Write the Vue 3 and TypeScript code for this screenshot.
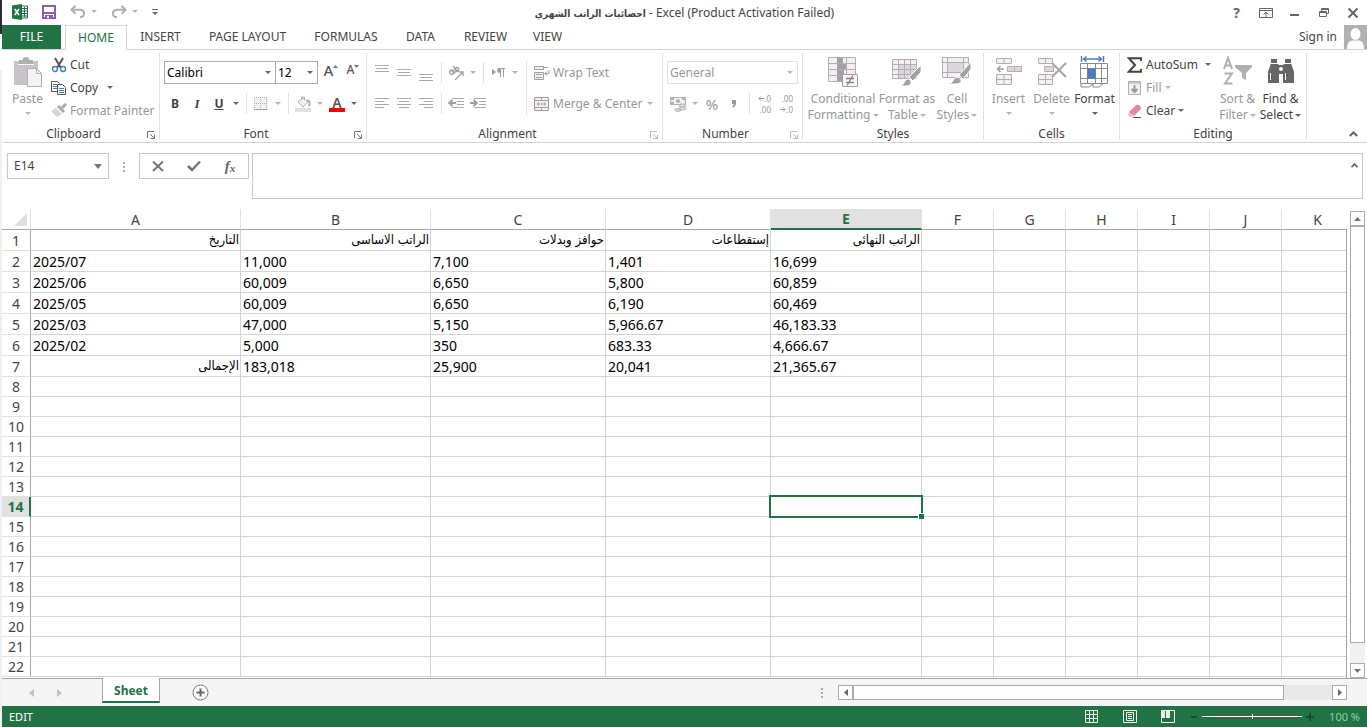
<script setup lang="ts">
import { ref } from 'vue'

interface Row {
  id: number
  cells: string[]
  tall: boolean
}

const tabs = ['INSERT', 'PAGE LAYOUT', 'FORMULAS', 'DATA', 'REVIEW', 'VIEW']
const columns = ['A', 'B', 'C', 'D', 'E', 'F', 'G', 'H', 'I', 'J', 'K']
const activeColumn = 'E'
const activeRow = 14

const data: string[][] = [
  ['التاريخ', 'الراتب الاساسى', 'حوافز وبدلات', 'إستقطاعات', 'الراتب النهائى'],
  ['2025/07', '11,000', '7,100', '1,401', '16,699'],
  ['2025/06', '60,009', '6,650', '5,800', '60,859'],
  ['2025/05', '60,009', '6,650', '6,190', '60,469'],
  ['2025/03', '47,000', '5,150', '5,966.67', '46,183.33'],
  ['2025/02', '5,000', '350', '683.33', '4,666.67'],
  ['الإجمالى', '183,018', '25,900', '20,041', '21,365.67'],
]

const rows: Row[] = Array.from({ length: 22 }, (_, i) => ({
  id: i + 1,
  cells: columns.map((_, c) => data[i]?.[c] ?? ''),
  tall: i < data.length,
}))

const isArabic = (text: string): boolean => /[\u0600-\u06ff]/.test(text)

const nameBox = ref('E14')
const formula = ref('')
const zoomLevel = ref(50)
</script>

<template>
  <div class="screen">
    <div class="edge"><i class="edge-dark"></i><i class="edge-gap"></i></div>
    <div class="app">
      <header class="titlebar">
        <div class="quick">
          <svg class="logo" width="16" height="16" viewBox="0 0 16 16">
            <path d="M9 2h6.5v12H9z" fill="#fff" stroke="#217346" />
            <path d="M10 4.5h5M10 7h5M10 9.5h5M10 12h5M12.5 3v10" stroke="#217346" />
            <path d="M0 1.5 10 0v16L0 14.5z" fill="#217346" />
            <path d="M2.8 5 7 11M7 5l-4.2 6" stroke="#fff" stroke-width="1.6" />
          </svg>
          <button class="q-save" aria-label="Save">
            <svg width="14" height="14" viewBox="0 0 14 14"><path d="M1 1h12v12H1z" fill="#fff" stroke="#8a5eb0" stroke-width="2" /><path d="M1 7h12v2H1zM3 10h8v3H3z" fill="#8a5eb0" /><path d="M5 11h2v2H5z" fill="#fff" /></svg>
          </button>
          <button class="q-undo" aria-label="Undo">
            <svg width="16" height="14" viewBox="0 0 16 14"><path d="M5.500.8 1.500 4.800l4 4M2 4.800h7.500c6 0 6 7 .5 7.500" fill="none" stroke="#b1b1b1" stroke-width="2" /></svg>
            <i class="caret off"></i>
          </button>
          <button class="q-redo" aria-label="Redo">
            <svg width="16" height="14" viewBox="0 0 16 14"><path d="M10.500.8l4 4-4 4M14 4.800H6.500c-6 0-6 7-.5 7.500" fill="none" stroke="#b1b1b1" stroke-width="2" /></svg>
            <i class="caret off"></i>
          </button>
          <button class="q-more" aria-label="Customize toolbar"><i class="bar"></i><i class="caret"></i></button>
        </div>
        <h1><bdi class="doc" dir="rtl">احصائيات الراتب الشهري</bdi> - Excel (Product Activation Failed)</h1>
        <div class="window">
          <button class="help" aria-label="Help">?</button>
          <button aria-label="Ribbon display options">
            <svg width="14" height="12" viewBox="0 0 14 12" fill="none" stroke="#666"><path d="M.5 1.500h13v9H.5zM.5 3.500h13M7 10V5.500M4.500 7.500 7 5.200l2.500 2.300" /></svg>
          </button>
          <button aria-label="Minimize"><svg width="10" height="12" viewBox="0 0 10 12"><path d="M0 7h9v2H0z" fill="#666" /></svg></button>
          <button aria-label="Restore"><svg width="12" height="12" viewBox="0 0 12 12" fill="none" stroke="#666"><path d="M3.500 4V1.500h7v5H8.500M3.500 2.500h7M1.500 4.500h7v5h-7zM1.500 5.500h7" /></svg></button>
          <button aria-label="Close"><svg width="12" height="12" viewBox="0 0 12 12"><path d="M1.500 1.500l9 9M10.500 1.500l-9 9" stroke="#666" stroke-width="2" /></svg></button>
        </div>
      </header>

      <nav class="tabs">
        <button class="file">FILE</button>
        <button class="tab active">HOME</button>
        <button v-for="t in tabs" :key="t" class="tab">{{ t }}</button>
        <span></span>
        <a class="signin" href="#">Sign in</a>
        <svg class="avatar" width="23" height="24" viewBox="0 0 23 24"><path d="M0 0h23v24H0z" fill="#b1b1b1" /><ellipse cx="11.500" cy="9" rx="5" ry="6" fill="#fff" /><path d="M3 24c0-6 2-8 5-8.500h7c3 .5 5 2.500 5 8.500z" fill="#fff" /></svg>
      </nav>

      <section class="ribbon">
        <div class="group clipboard">
          <div class="body">
            <button class="big off">
              <svg width="30" height="32" viewBox="0 0 30 32"><path d="M1 5h24v24H1z" fill="#c6c4c6" /><path d="M6 4h4V2.500Q10 1 13 1t3 1.500V4h4v4H6z" fill="#b1afb1" /><path d="M5 8h16v1H5z" fill="#fff" /><path d="M14.500 12.500h9l5 5v13h-14z" fill="#f6f1f6" stroke="#b1afb1" /><path d="M23.500 12.500v5h5" fill="none" stroke="#b1afb1" /></svg>
              <span>Paste</span><i class="caret off"></i>
            </button>
            <div class="list">
              <button>
                <svg width="16" height="16" viewBox="0 0 16 16" fill="none"><path d="M4 1l6 10M12 1L6 11" stroke="#555" stroke-width="2" /><circle cx="4" cy="12" r="2.500" stroke="#4a7ebb" stroke-width="1.400" /><circle cx="12" cy="12" r="2.500" stroke="#4a7ebb" stroke-width="1.400" /></svg>
                Cut
              </button>
              <button>
                <svg width="16" height="16" viewBox="0 0 16 16" fill="#fff" stroke="#555"><path d="M.5 1.500h6l2 2v8h-8z" /><path d="M2 4.500h4M2 6.500h4M2 8.500h4" stroke="#4a7ebb" /><path d="M6.500 4.500h5l3 3v7h-8z" /><path d="M8 8.500h5M8 10.500h5M8 12.500h5" stroke="#4a7ebb" /></svg>
                Copy <i class="caret far"></i>
              </button>
              <button class="off">
                <svg width="16" height="16" viewBox="0 0 16 16"><path d="M0 8l5-3 6 6-5 3z" fill="#d8d4d8" /><path d="M6 4l2-2 6 6-2 2z" fill="#aaa8aa" /><path d="M11 5l4-4" stroke="#aaa8aa" stroke-width="3" /></svg>
                Format Painter
              </button>
            </div>
          </div>
          <footer>Clipboard<button class="launch" aria-label="Clipboard settings"><svg width="8" height="8" viewBox="0 0 8 8" fill="none" stroke="#777"><path d="M.5 7V.5H7M3 3l4 4M7.500 3.500v4h-4" /></svg></button></footer>
        </div>

        <div class="group font">
          <div class="body rows">
            <div class="row selects">
              <label class="pick family"><select aria-label="Font family"><option>Calibri</option></select><i class="caret"></i></label>
              <label class="pick size"><select aria-label="Font size"><option>12</option></select><i class="caret"></i></label>
              <button class="c22 grow" aria-label="Increase font size">A<svg width="5" height="3" viewBox="0 0 5 3"><path d="M0 3h5L2.500 0z" fill="#4a7ebb" /></svg></button>
              <button class="c22 shrink" aria-label="Decrease font size">A<svg width="5" height="3" viewBox="0 0 5 3"><path d="M0 0h5L2.500 3z" fill="#4a7ebb" /></svg></button>
            </div>
            <div class="row glyphs">
              <button class="c22 b">B</button><button class="c22 i">I</button><button class="c22 u">U</button>
              <i class="caret c12"></i><i class="vr"></i>
              <button class="c22" aria-label="Borders"><svg width="14" height="14" viewBox="0 0 14 14"><path d="M0 0h14v13H0z" fill="#f5eff5" /><path d="M.5 0v13M6.500 0v13M12.500 0v13M0 .5h13M0 6.500h13" stroke="#b1afb1" stroke-dasharray="1 1" /><path d="M0 12.500h13" stroke="#999" /></svg></button>
              <i class="caret off c12"></i><i class="vr"></i>
              <button class="c22" aria-label="Fill colour"><svg width="16" height="16" viewBox="0 0 16 16"><path d="M0 12h16v4H0z" fill="#e4dfe4" /><path d="M3 6l5-4 5 4-5 5z" fill="#f5eff5" stroke="#b1afb1" /><path d="M6.500 4V1h3v3" fill="none" stroke="#b1afb1" /><path d="M12 4c3 1 3 4 2 6" fill="none" stroke="#b1afb1" stroke-width="2" /></svg></button>
              <i class="caret off c12"></i>
              <button class="c22 colour" aria-label="Font colour">A</button>
              <i class="caret c12"></i>
            </div>
          </div>
          <footer>Font<button class="launch" aria-label="Font settings"><svg width="8" height="8" viewBox="0 0 8 8" fill="none" stroke="#777"><path d="M.5 7V.5H7M3 3l4 4M7.500 3.500v4h-4" /></svg></button></footer>
        </div>

        <div class="group alignment">
          <div class="body">
            <div class="rows">
              <div class="row">
                <button class="c22" aria-label="Top align"><svg width="14" height="16" viewBox="0 0 14 16" stroke="#aaa"><path d="M0 .5h14M1 3.500h12M0 6.500h14" /></svg></button>
                <button class="c22" aria-label="Middle align"><svg width="14" height="16" viewBox="0 0 14 16" stroke="#aaa"><path d="M0 4.500h14M1 7.500h12M0 10.500h14" /></svg></button>
                <button class="c22" aria-label="Bottom align"><svg width="14" height="16" viewBox="0 0 14 16" stroke="#aaa"><path d="M0 9.500h14M1 12.500h12M0 15.500h14" /></svg></button>
                <i class="vr"></i>
                <button class="c22" aria-label="Orientation"><svg width="16" height="16" viewBox="0 0 16 16" fill="none" stroke="#a09ea0" stroke-width="1.300"><circle cx="3.500" cy="7.500" r="2" /><path d="M3.500 4.500l4 4M5 1l5 5.500" /><circle cx="8.800" cy="4.500" r="2" /><path d="M7 15l8-8M11 7h4v4" /></svg></button>
                <i class="caret off c12"></i><i class="vr thin"></i>
                <button class="c22" aria-label="Text direction"><svg width="13" height="9" viewBox="0 0 13 9"><path d="M0 1l4 3-4 3z" fill="#a09ea0" /><path d="M8.500 0v9M11.500 0v9M6 .5h7" stroke="#a09ea0" /><path d="M8.500 0Q5 0 5 2.500T8.500 5z" fill="#a09ea0" /></svg></button>
                <i class="caret off c12"></i>
              </div>
              <div class="row">
                <button class="c22" aria-label="Align left"><svg width="14" height="11" viewBox="0 0 14 11" stroke="#aaa"><path d="M0 .5h14M0 3.500h9M0 6.500h14M0 9.500h9" /></svg></button>
                <button class="c22" aria-label="Center"><svg width="14" height="11" viewBox="0 0 14 11" stroke="#aaa"><path d="M0 .5h14M2 3.500h10M0 6.500h14M2 9.500h10" /></svg></button>
                <button class="c22" aria-label="Align right"><svg width="14" height="11" viewBox="0 0 14 11" stroke="#aaa"><path d="M0 .5h14M5 3.500h9M0 6.500h14M5 9.500h9" /></svg></button>
                <i class="vr"></i>
                <button class="c22" aria-label="Decrease indent"><svg width="16" height="11" viewBox="0 0 16 11"><path d="M4 .5h12M9 3.500h7M9 6.500h7M4 9.500h12" stroke="#aaa" /><path d="M8 5H2M4.500 2 1.200 5l3.300 3" fill="none" stroke="#a09ea0" stroke-width="2" /></svg></button>
                <button class="c22" aria-label="Increase indent"><svg width="16" height="11" viewBox="0 0 16 11"><path d="M4 .5h12M9 3.500h7M9 6.500h7M4 9.500h12" stroke="#aaa" /><path d="M0 5h6M3.500 2l3.300 3-3.300 3" fill="none" stroke="#a09ea0" stroke-width="2" /></svg></button>
              </div>
            </div>
            <i class="vr tall"></i>
            <div class="rows wide">
              <div class="row off">
                <button class="text"><svg width="16" height="16" viewBox="0 0 16 16" fill="#f5eff5" stroke="#a09ea0"><path d="M.5 1.500h9v3h-9zM.5 7.500h9v7h-9zM9 2.500h5M2 9.500h6M2 12.500h6" /><path d="M15 5v3.500h-4M13 6.500l-2.500 2L13 10.500" fill="none" /></svg>Wrap Text</button>
              </div>
              <div class="row off">
                <button class="text"><svg width="16" height="16" viewBox="0 0 16 16" fill="#f5eff5" stroke="#a09ea0"><path d="M.5 1.500h14v13H.5zM.5 4.500h14M.5 11.500h14M7.500 1.500v3M7.500 11.500v3M3 8h9M5 6.500 3 8l2 1.500M10 6.500 12 8l-2 1.500" /></svg>Merge &amp; Center</button>
                <i class="caret off end"></i>
              </div>
            </div>
          </div>
          <footer>Alignment<button class="launch" aria-label="Alignment settings"><svg width="8" height="8" viewBox="0 0 8 8" fill="none" stroke="#bbb"><path d="M.5 7V.5H7M3 3l4 4M7.500 3.500v4h-4" /></svg></button></footer>
        </div>

        <div class="group number">
          <div class="body rows">
            <div class="row selects">
              <label class="pick format"><select aria-label="Number format"><option>General</option></select><i class="caret off"></i></label>
            </div>
            <div class="row off">
              <button class="c22" aria-label="Accounting format"><svg width="17" height="16" viewBox="0 0 17 16"><path d="M.5 1.500h15v7H.5z" fill="#f5eff5" stroke="#b1afb1" /><path d="M1 2h3v2H1zM12 2h3v2h-3zM1 6h3v2H1z" fill="#b1afb1" /><circle cx="8" cy="5" r="2" fill="#b1afb1" /><g fill="#e4dfe4" stroke="#b1afb1"><ellipse cx="12.500" cy="12.500" rx="3.500" ry="1.500" /><ellipse cx="12.500" cy="9.500" rx="3.500" ry="1.500" /><ellipse cx="8" cy="14" rx="3" ry="1.300" /></g></svg></button>
              <i class="caret off c12"></i>
              <button class="c22 percent">%</button>
              <button class="c22" aria-label="Comma style"><svg width="6" height="9" viewBox="0 0 6 9"><path d="M1 1h4v3Q5 7 2 8.500L1 8q2-1.500 1.500-3H1z" fill="#999" /></svg></button>
              <i class="vr"></i>
              <button class="c22 decimals" aria-label="Increase decimal"><span><svg width="6" height="5" viewBox="0 0 6 5"><path d="M6 2.500H1M3 .5l-2 2 2 2" fill="none" stroke="#999" /></svg>.0</span><span>.00</span></button>
              <button class="c22 decimals" aria-label="Decrease decimal"><span>.00</span><span><svg width="6" height="5" viewBox="0 0 6 5"><path d="M0 2.500h5M3 .5l2 2-2 2" fill="none" stroke="#999" /></svg>.0</span></button>
            </div>
          </div>
          <footer>Number<button class="launch" aria-label="Number settings"><svg width="8" height="8" viewBox="0 0 8 8" fill="none" stroke="#bbb"><path d="M.5 7V.5H7M3 3l4 4M7.500 3.500v4h-4" /></svg></button></footer>
        </div>

        <div class="group styles">
          <div class="body">
            <button class="big off">
              <svg width="30" height="32" viewBox="0 0 30 32"><path d="M.5 1.500h27v24H.5z" fill="#f5eff5" stroke="#b1afb1" /><path d="M.5 7.500h27M.5 13.500h27M.5 19.500h27M9.500 1.500v24M18.500 1.500v24" stroke="#b1afb1" /><path d="M9 2h6v5H9zM9 8h9v5H9zM9 14h7v5H9zM9 20h5v5H9z" fill="#a3a1a3" /><path d="M14.500 18.500h15v12h-15z" fill="#f9f5f9" stroke="#a09ea0" /><path d="M18 22.500h8M18 26.500h8M25 19.500l-6 10" stroke="#888" stroke-width="1.300" /></svg>
              <span>Conditional</span><span>Formatting <i class="caret off"></i></span>
            </button>
            <button class="big off">
              <svg width="30" height="32" viewBox="0 0 30 32"><path d="M.5 3.500h24v19H.5z" fill="#f5eff5" stroke="#b1afb1" /><path d="M7 8h17v14H7z" fill="#dcd7dc" /><path d="M.5 8.500h24M.5 13.500h24M.5 18.500h24M6.500 3.500v19M12.500 3.500v19M18.500 3.500v19" stroke="#b1afb1" /><path d="M29 9v7l-8 9-4-4z" fill="#a3a1a3" stroke="#fff" /><path d="M7 30q5-1 6-5 3-4 6 0 1 5-5 5z" fill="#a3a1a3" stroke="#fff" /></svg>
              <span>Format as</span><span>Table <i class="caret off"></i></span>
            </button>
            <button class="big off">
              <svg width="30" height="32" viewBox="0 0 30 32"><path d="M.5 1.500h26v20H.5z" fill="#f5eff5" stroke="#b1afb1" /><path d="M5 6h17v11H5z" fill="#dcd7dc" /><path d="M.5 6.500h26M.5 16.500h26M5.500 1.500v20M21.500 1.500v20" stroke="#b1afb1" /><path d="M29 6v7l-8 10-4-4z" fill="#a3a1a3" stroke="#fff" /><path d="M6 28q5-1 6-5 3-4 7 0 1 5-5 5z" fill="#a3a1a3" stroke="#fff" /></svg>
              <span>Cell</span><span>Styles <i class="caret off"></i></span>
            </button>
          </div>
          <footer>Styles</footer>
        </div>

        <div class="group cells">
          <div class="body">
            <button class="big off">
              <svg width="28" height="32" viewBox="0 0 28 32" fill="#f5eff5" stroke="#b1afb1"><path d="M1.500 2.500h15v5h-15zM9 2.500v5M1.500 18.500h15v10h-15zM9 18.500v10M1.500 23.500h15" /><path d="M12.500 10.500h14v5h-14zM19.500 10.500v5" fill="#ddd7dd" /><path d="M9 13H3M5.500 10 2.500 13l3 3" fill="none" stroke="#a3a1a3" stroke-width="1.600" /></svg>
              <span>Insert</span><i class="caret off"></i>
            </button>
            <button class="big off">
              <svg width="30" height="32" viewBox="0 0 30 32" fill="#f5eff5" stroke="#b1afb1"><path d="M1.500 2.500h14v5h-14zM8.500 2.500v5M1.500 18.500h14v10h-14zM8.500 18.500v10M1.500 23.500h14" /><path d="M7.500 10.500h9v5h-9z" fill="#ddd7dd" /><path d="M15 7l14 14M29 7L15 21" fill="none" stroke="#a9a7a9" stroke-width="2.200" /></svg>
              <span>Delete</span><i class="caret off"></i>
            </button>
            <button class="big">
              <svg width="29" height="32" viewBox="0 0 29 32" fill="none" stroke="#8a8a8a"><path d="M.5 7.500h27v20H.5z" fill="#fff" /><path d="M.5 12.500h27M.5 22.500h27M7.500 7.500v20M15.500 7.500v20M21.500 7.500v20" /><path d="M8 13h7v9H8z" fill="#4a7ebb" stroke="#4a7ebb" /><path d="M1 28v3h8l4-3v3h6l4-3" /><path d="M1.500 0v6M23.500 0v6M3 3h19M6.500.5 3.500 3l3 2.500M18.500.5l3 2.500-3 2.500" stroke="#4a7ebb" stroke-width="1.400" /></svg>
              <span>Format</span><i class="caret"></i>
            </button>
          </div>
          <footer>Cells</footer>
        </div>

        <div class="group editing">
          <div class="body">
            <div class="list">
              <button>
                <svg width="16" height="16" viewBox="0 0 16 16"><path d="M14 4V1.200H1.800L8 8l-6.200 6.800H14V12" fill="none" stroke="#444" stroke-width="2" /></svg>
                AutoSum <i class="caret far"></i>
              </button>
              <button class="off">
                <svg width="16" height="16" viewBox="0 0 16 16"><path d="M1.500 1.500h12v13h-12z" fill="#f5eff5" stroke="#b1afb1" /><path d="M2 2h11v2H2z" fill="#ccc8cc" /><path d="M7.500 5v7M4.500 9l3 3 3-3" fill="none" stroke="#999" stroke-width="2" /></svg>
                Fill <i class="caret off"></i>
              </button>
              <button>
                <svg width="16" height="16" viewBox="0 0 16 16"><path d="M2 9l7-7q2-1 4 1t0 4l-6 6z" fill="#e8889a" /><path d="M2 9l5 4-2 1H3l-2-2z" fill="#f3b9c4" /><path d="M6 14.500h8" stroke="#555" /></svg>
                Clear <i class="caret"></i>
              </button>
            </div>
            <button class="big off">
              <svg width="30" height="32" viewBox="0 0 30 32"><path d="M1 13 5 2l4 11M2.500 9.500h5M1.500 17.500h7.500L2 27.500h7.500" fill="none" stroke="#b1afb1" stroke-width="2" /><path d="M12 9h17v2l-6 6v7l-4-2v-5l-7-6z" fill="#b1afb1" /></svg>
              <span>Sort &amp;</span><span>Filter <i class="caret off"></i></span>
            </button>
            <button class="big">
              <svg width="28" height="32" viewBox="0 0 28 32"><path d="M4 3h6v4l2 2h4l2-2V3h6v4l3 9v11H16v-9h-4v9H1V16l3-9z" fill="#666" /><path d="M4 7.500h7M17 7.500h7M3.500 17v7M18.500 17v7" stroke="#fff" /><circle cx="14" cy="13" r="2" fill="#fff" /></svg>
              <span>Find &amp;</span><span>Select <i class="caret"></i></span>
            </button>
          </div>
          <footer>Editing</footer>
        </div>
        <button class="collapse" aria-label="Collapse ribbon"><svg width="9" height="6" viewBox="0 0 9 6"><path d="M.8 5 4.500 1.500 8.200 5" fill="none" stroke="#666" stroke-width="2" /></svg></button>
      </section>

      <section class="formula">
        <label class="name"><input v-model="nameBox" aria-label="Name box" /><svg width="8" height="5" viewBox="0 0 8 5"><path d="M0 0h8L4 5z" fill="#777" /></svg></label>
        <span class="dots"><i></i><i></i><i></i></span>
        <div class="fx">
          <button aria-label="Cancel"><svg width="12" height="12" viewBox="0 0 12 12"><path d="M1 1.500 11 11M11 1.500 1 11" stroke="#777" stroke-width="2" /></svg></button>
          <button aria-label="Enter"><svg width="14" height="12" viewBox="0 0 14 12"><path d="M1 6l4 4 8-8.500" fill="none" stroke="#777" stroke-width="2.500" /></svg></button>
          <button class="fn">f<sub>x</sub></button>
        </div>
        <div class="entry">
          <textarea v-model="formula" aria-label="Formula bar"></textarea>
          <svg width="7" height="5" viewBox="0 0 7 5"><path d="M.5 4.200 3.500 1.200l3 3" fill="none" stroke="#666" stroke-width="1.800" /></svg>
        </div>
      </section>

      <main class="sheet">
        <div class="viewport">
          <table>
            <colgroup>
              <col class="w-head" /><col class="w-a" /><col class="w-b" /><col class="w-c" /><col class="w-d" /><col class="w-e" />
              <col v-for="n in 6" :key="n" class="w-std" />
            </colgroup>
            <thead>
              <tr>
                <th class="corner"><svg width="13" height="13" viewBox="0 0 13 13"><path d="M13 0v13H0z" fill="#dfdfdf" /></svg></th>
                <th v-for="c in columns" :key="c" scope="col" :class="{ on: c === activeColumn }">{{ c }}</th>
              </tr>
            </thead>
            <tbody>
              <tr v-for="r in rows" :key="r.id" :class="{ tall: r.tall }">
                <th scope="row" :class="{ on: r.id === activeRow }">{{ r.id }}</th>
                <td
                  v-for="(text, i) in r.cells"
                  :key="i"
                  :class="{ ar: isArabic(text), cursor: r.id === activeRow && columns[i] === activeColumn }"
                  :dir="isArabic(text) ? 'rtl' : 'ltr'"
                >{{ text }}</td>
              </tr>
            </tbody>
          </table>
        </div>
        <div class="vscroll">
          <button aria-label="Scroll up"><svg width="7" height="4" viewBox="0 0 7 4"><path d="M0 4h7L3.500 0z" fill="#777" /></svg></button>
          <i class="thumb"></i><i class="track"></i>
          <button aria-label="Scroll down"><svg width="7" height="4" viewBox="0 0 7 4"><path d="M0 0h7L3.500 4z" fill="#777" /></svg></button>
        </div>
      </main>

      <section class="sheetbar">
        <button class="arrow" aria-label="Previous sheet"><svg width="5" height="8" viewBox="0 0 5 8"><path d="M5 0v8L0 4z" fill="#c2c2c2" /></svg></button>
        <button class="arrow" aria-label="Next sheet"><svg width="5" height="8" viewBox="0 0 5 8"><path d="M0 0v8l5-4z" fill="#c2c2c2" /></svg></button>
        <button class="sheet-tab">Sheet</button>
        <button class="add" aria-label="New sheet"><svg width="17" height="17" viewBox="0 0 17 17"><circle cx="8.500" cy="8.500" r="7.500" fill="#fff" stroke="#777" /><path d="M8.500 4.500v8M4.500 8.500h8" stroke="#666" stroke-width="2" /></svg></button>
        <span class="dots"><i></i><i></i><i></i></span>
        <div class="hscroll">
          <button aria-label="Scroll left"><svg width="4" height="7" viewBox="0 0 4 7"><path d="M4 0v7L0 3.500z" fill="#666" /></svg></button>
          <i class="thumb"></i><i class="track"></i>
          <button aria-label="Scroll right"><svg width="4" height="7" viewBox="0 0 4 7"><path d="M0 0v7l4-3.500z" fill="#666" /></svg></button>
        </div>
      </section>

      <footer class="status">
        <span class="mode">EDIT</span>
        <div class="views">
          <button aria-label="Normal view"><svg width="14" height="13" viewBox="0 0 14 13" fill="none" stroke="#e8f3ec"><path d="M.5.5h12v12H.5zM.5 4.500h12M.5 8.500h12M4.500.5v12M8.500.5v12" /></svg></button>
          <button aria-label="Page layout view"><svg width="14" height="13" viewBox="0 0 14 13" fill="none" stroke="#e8f3ec"><path d="M.5.5h13v12H.5zM3.500 2.500h7v8h-7zM5 4.500h4M5 6.500h4M5 8.500h4" /></svg></button>
          <button aria-label="Page break view"><svg width="14" height="13" viewBox="0 0 14 13"><path d="M.5.5h13v12H.5z" fill="none" stroke="#e8f3ec" /><path d="M0 0h4v8H0zM5 0h4v8H5z" fill="#e8f3ec" /></svg></button>
        </div>
        <div class="zoom">
          <button aria-label="Zoom out"><svg width="8" height="8" viewBox="0 0 8 8"><path d="M1 3h6v2H1z" fill="#0d5228" /></svg></button>
          <input v-model="zoomLevel" type="range" min="0" max="100" aria-label="Zoom" />
          <button aria-label="Zoom in"><svg width="8" height="8" viewBox="0 0 8 8"><path d="M0 3h3V0h2v3h3v2H5v3H3V5H0z" fill="#0d5228" /></svg></button>
          <span class="pct">100 %</span>
        </div>
      </footer>
    </div>
  </div>
</template>

<style>
body {
  margin: 0;
  background: #fff;
}
</style>

<style scoped>
.screen {
  display: flex;
  height: 100vh;
  overflow: hidden;
  font-family: "Noto Sans", "Open Sans", "DejaVu Sans", sans-serif;
  font-size: 12px;
  line-height: 16px;
  color: #444;
  background: #fff;
}
.screen * {
  box-sizing: border-box;
}
button,
select,
input,
textarea {
  font: inherit;
  color: inherit;
  background: none;
  border: 0;
  padding: 0;
  margin: 0;
  border-radius: 0;
  outline: 0;
  white-space: nowrap;
}
svg {
  display: block;
  flex: none;
}
.edge {
  width: 2px;
  flex: none;
  background: #f1f1f1;
}
.edge i {
  display: block;
  height: 36px;
  background: #fff;
}
.edge .edge-dark {
  height: 34px;
  background: #2d2d30;
}
.app {
  flex: 1;
  min-width: 0;
  display: flex;
  flex-direction: column;
}
.caret {
  display: inline-block;
  flex: none;
  width: 0;
  height: 0;
  border: 3px solid transparent;
  border-top-color: #666;
  border-bottom: 0;
}
.caret.off {
  border-top-color: #b5b5b5;
}
.off {
  color: #979797;
}

/* Title bar */
.titlebar {
  flex: none;
  height: 25px;
  display: grid;
  grid-template-columns: 1fr auto 1fr;
  align-items: center;
}
.quick {
  display: flex;
  align-items: center;
  padding: 0 0 3px 10px;
  gap: 14px;
}
.quick button {
  display: flex;
  align-items: center;
  gap: 5px;
}
.quick .q-more {
  flex-direction: column;
  gap: 2px;
}
.bar {
  width: 6px;
  height: 1px;
  background: #666;
}
h1 {
  margin: 0;
  font-size: 12px;
  font-weight: 400;
  line-height: 25px;
}
.doc {
  font-family: "DejaVu Sans Condensed", "DejaVu Sans", sans-serif;
  font-size: 10px;
  font-weight: 700;
}
.window {
  display: flex;
  justify-content: flex-end;
}
.window button {
  width: 29px;
  height: 23px;
  display: flex;
  align-items: center;
  justify-content: center;
}
.window .help {
  font-weight: 700;
  font-size: 14px;
  color: #666;
}

/* Tabs */
.tabs {
  flex: none;
  height: 25px;
  display: grid;
  grid-template-columns: 59px 66px 67px 107px 90px 59px 71px 53px 1fr auto 23px;
  border-bottom: 1px solid #d4d4d4;
}
.file {
  background: #217346;
  color: #fff;
}
.tab.active {
  margin: 0 0 -1px 4px;
  background: #fff;
  border: 1px solid #d4d4d4;
  border-bottom: 0;
  color: #217346;
}
.signin {
  color: #444;
  text-decoration: none;
  line-height: 24px;
  padding-right: 7px;
}

/* Ribbon */
.ribbon {
  flex: none;
  height: 93px;
  padding: 3px 0 2px;
  display: flex;
  border-bottom: 1px solid #d4d4d4;
}
.group {
  flex: none;
  display: flex;
  flex-direction: column;
  border-right: 1px solid #e1e1e1;
}
.group .body {
  flex: 1;
  display: flex;
}
.group footer {
  position: relative;
  height: 12px;
  line-height: 12px;
  text-align: center;
  padding-right: 14px;
}
.styles footer,
.cells footer,
.editing footer {
  padding-right: 0;
}
.launch {
  position: absolute;
  right: 4px;
  top: 3px;
}
.clipboard { width: 158px; }
.font { width: 207px; }
.alignment { width: 296px; }
.number { width: 140px; }
.styles { width: 181px; }
.cells { width: 136px; }
.editing { width: 187px; }
.big {
  width: 43px;
  padding-top: 3px;
  display: flex;
  flex-direction: column;
  align-items: center;
}
.big svg {
  margin-bottom: 3px;
}
.big span {
  line-height: 16px;
}
.big > .caret {
  margin-top: 5px;
}
.big span .caret {
  vertical-align: 2px;
  margin-left: -1px;
}
.clipboard .big {
  width: 49px;
  padding-left: 2px;
}
.styles .body {
  display: grid;
  grid-template-columns: 70px 58px 42px;
  padding-left: 5px;
}
.styles .big {
  width: auto;
}
.cells .body {
  padding-left: 3px;
}
.list {
  display: flex;
  flex-direction: column;
}
.list button {
  height: 23px;
  display: flex;
  align-items: center;
  gap: 3px;
}
.list .far {
  margin-left: 6px;
}
.editing .list {
  width: 96px;
  padding-left: 7px;
}
.editing .list .far {
  margin-left: auto;
  margin-right: 5px;
}
.rows,
.group .body.rows {
  display: flex;
  flex-direction: column;
  padding-top: 8px;
  gap: 8px;
}
.row {
  height: 23px;
  display: flex;
  align-items: center;
}
.font .rows,
.number .rows,
.alignment .rows {
  padding-left: 4px;
}
.c22 {
  width: 22px;
  height: 22px;
  display: flex;
  align-items: center;
  justify-content: center;
}
.c12 {
  margin: 0 3px;
}
.pick {
  position: relative;
  display: block;
  height: 23px;
}
.pick select {
  appearance: none;
  width: 100%;
  height: 23px;
  padding: 0 2px;
  border: 1px solid #ababab;
  background: #fff;
  color: #000;
}
.pick .caret {
  position: absolute;
  right: 5px;
  top: 10px;
}
.family { width: 112px; }
.size {
  width: 43px;
  margin-left: -1px;
}
.format { width: 131px; }
.format select {
  border-color: #e1e1e1;
  color: #979797;
}
.grow,
.shrink {
  font-size: 15px;
  font-weight: 500;
  color: #555;
  align-items: baseline;
}
.grow {
  margin-left: 2px;
}
.shrink {
  font-size: 12px;
}
.grow svg,
.shrink svg {
  align-self: flex-start;
  margin-top: 3px;
}
.glyphs .b,
.glyphs .u {
  font-weight: 700;
}
.glyphs .i {
  font: italic 700 13px "Liberation Serif", serif;
}
.glyphs .u {
  text-decoration: underline;
}
.vr {
  width: 1px;
  height: 21px;
  background: #e1e1e1;
  margin: 0 3px 0 4px;
}
.alignment .vr.tall {
  height: 54px;
  margin: 8px 0 0;
}
.alignment .body > .rows:first-child {
  width: 159px;
}
.alignment .wide {
  flex: 1;
  padding-left: 7px;
}
.colour {
  width: 16px;
  height: 16px;
  margin: 0 3px;
  font-size: 14px;
  font-weight: 600;
  color: #555;
  line-height: 13px;
  align-items: flex-start;
  border-bottom: 4px solid #f00;
}
.text {
  display: flex;
  align-items: center;
  gap: 3px;
}
.end {
  margin-left: auto;
  margin-right: 9px;
}
.percent {
  font-size: 15px;
}
.decimals {
  flex-direction: column;
  font-size: 8px;
  line-height: 11px;
  align-items: flex-end;
  padding-right: 4px;
}
.decimals span {
  display: flex;
  align-items: center;
}
.collapse {
  margin: auto 9px 3px auto;
}

/* Formula bar */
.formula {
  flex: none;
  height: 66px;
  padding: 10px 4px 10px 5px;
  display: flex;
  align-items: flex-start;
}
.name {
  width: 102px;
  height: 26px;
  display: flex;
  align-items: center;
  border: 1px solid #c6c6c6;
  padding: 0 6px;
}
.name input {
  flex: 1;
  min-width: 0;
}
.dots {
  width: 30px;
  height: 27px;
  display: flex;
  flex-direction: column;
  align-items: center;
  justify-content: center;
  gap: 2px;
}
.dots i {
  width: 2px;
  height: 2px;
  background: #aaa;
}
.fx {
  width: 110px;
  height: 26px;
  display: grid;
  grid-template-columns: repeat(3, 36px);
  border: 1px solid #c6c6c6;
  margin-right: 3px;
}
.fx button {
  display: flex;
  align-items: center;
  justify-content: center;
}
.fx .fn {
  font: italic 700 15px "Liberation Serif", serif;
  color: #666;
}
.fn sub {
  font-size: 11px;
  align-self: flex-end;
  line-height: 20px;
}
.entry {
  position: relative;
  flex: 1;
  height: 46px;
}
.entry textarea {
  display: block;
  width: 100%;
  height: 46px;
  resize: none;
  border: 1px solid #c6c6c6;
}
.entry svg {
  position: absolute;
  right: 5px;
  top: 10px;
}

/* Grid */
.sheet {
  flex: 1;
  min-height: 0;
  display: flex;
}
.viewport {
  position: relative;
  flex: 1;
  min-width: 0;
  overflow: hidden;
}
.viewport::after {
  content: "";
  position: absolute;
  top: 20px;
  right: 0;
  bottom: 0;
  width: 1px;
  background: #a6a6a6;
}
table {
  width: 1352px;
  table-layout: fixed;
  border-collapse: separate;
  border-spacing: 0;
  font-size: 14px;
  color: #000;
}
.w-head { width: 29px; }
.w-a { width: 210px; }
.w-b { width: 190px; }
.w-c { width: 175px; }
.w-d { width: 165px; }
.w-e { width: 151px; }
.w-std { width: 72px; }
th,
td {
  height: 20px;
  padding: 0;
  line-height: 19px;
  white-space: nowrap;
  border-right: 1px solid #d4d4d4;
  border-bottom: 1px solid #d4d4d4;
}
td {
  padding: 0 2px;
}
.tall > * {
  height: 21px;
  padding-top: 1px;
}
th {
  font-weight: 400;
  color: #444;
}
thead th {
  height: 21px;
  padding-top: 1px;
  border-bottom-color: #a6a6a6;
  border-right-color: #e1e1e1;
}
tbody th {
  border-right-color: #a6a6a6;
  border-bottom-color: #e1e1e1;
}
th.on {
  font-weight: 700;
  color: #217346;
  background: #e1e1e1;
}
thead th.on {
  border-bottom: 2px solid #217346;
  line-height: 18px;
}
tbody th.on {
  border-right: 2px solid #217346;
}
.corner svg {
  margin-left: 12px;
}
td.ar {
  padding-top: 0;
  font-family: "DejaVu Sans Condensed", "DejaVu Sans", sans-serif;
  font-size: 13px;
  line-height: 18px;
  text-align: start;
}
td.cursor {
  position: relative;
}
td.cursor::before {
  content: "";
  position: absolute;
  inset: -2px;
  border: 2px solid #217346;
}
td.cursor::after {
  content: "";
  position: absolute;
  right: -3px;
  bottom: -3px;
  width: 5px;
  height: 5px;
  background: #217346;
  border: 1px solid #fff;
  border-width: 1px 0 0 1px;
}
.vscroll {
  width: 20px;
  padding: 2px 2px 0 3px;
  display: flex;
  flex-direction: column;
}
.vscroll button,
.hscroll button {
  flex: none;
  display: flex;
  align-items: center;
  justify-content: center;
  background: #fff;
  border: 1px solid #ababab;
}
.vscroll button {
  height: 15px;
}
.thumb {
  background: #fff;
  border: 1px solid #ababab;
}
.vscroll .thumb {
  flex: 418;
}
.vscroll .track {
  flex: 20;
  background: #f1f1f1;
}

/* Sheet bar */
.sheetbar {
  flex: none;
  height: 28px;
  display: flex;
  align-items: center;
  background: #f5f5f5;
  border-top: 1px solid #a6a6a6;
  padding-left: 15px;
}
.arrow {
  width: 28px;
  display: flex;
  justify-content: center;
}
.sheet-tab {
  align-self: flex-start;
  width: 58px;
  height: 25px;
  margin: -1px 32px 0 29px;
  padding-top: 3px;
  background: #fff;
  border: 1px solid #a6a6a6;
  border-top: 0;
  border-bottom: 2px solid #217346;
  font-weight: 700;
  color: #217346;
}
.sheetbar .dots {
  margin-left: auto;
  width: 32px;
}
.hscroll {
  width: 509px;
  height: 15px;
  margin-right: 20px;
  display: flex;
  background: #e9e9e9;
}
.hscroll button {
  width: 15px;
}
.hscroll .thumb {
  flex: 431;
}
.hscroll .track {
  flex: 48;
}

/* Status bar */
.status {
  flex: none;
  height: 21px;
  display: flex;
  align-items: center;
  background: #217346;
  color: #fff;
  font-size: 11px;
  padding: 0 7px;
}
.views {
  margin-left: auto;
  display: flex;
  gap: 24px;
}
.zoom {
  display: flex;
  align-items: center;
  margin-left: 15px;
}
.zoom input {
  appearance: none;
  width: 100px;
  height: 7px;
  margin: 0 4px;
  background: linear-gradient(#fff, #fff) center / 100% 1px no-repeat;
}
.zoom input::-webkit-slider-thumb {
  appearance: none;
  width: 1px;
  height: 5px;
  background: #fff;
}
.pct {
  width: 46px;
  text-align: right;
  color: #8fd19e;
}
</style>
